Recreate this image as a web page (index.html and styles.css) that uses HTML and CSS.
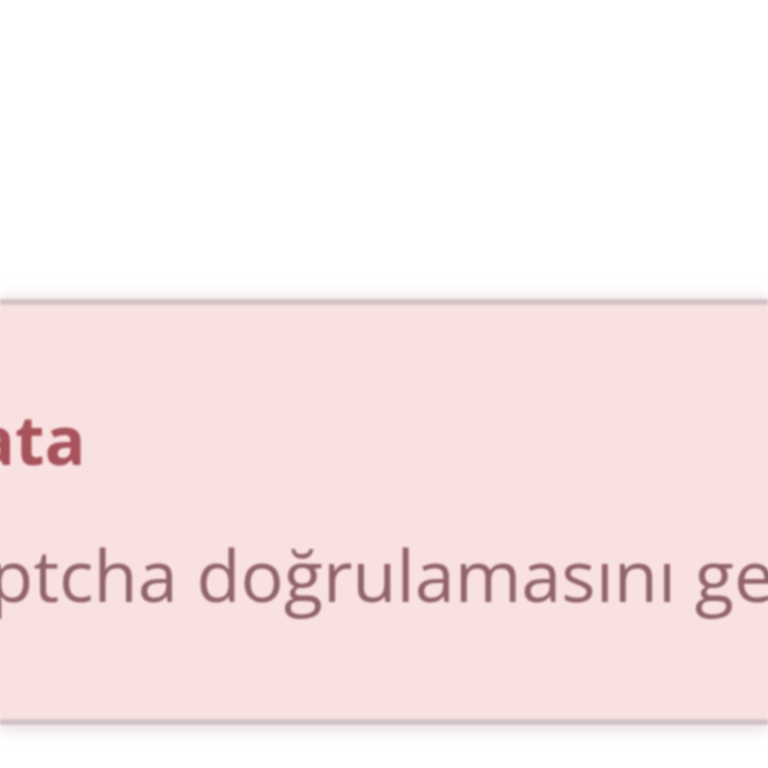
FILE: index.html
```html
<!DOCTYPE html>
<html lang="tr">
<head>
<meta charset="utf-8">
<title>Hata</title>
<link rel="stylesheet" href="styles.css">
</head>
<body>
<div class="page">
  <div class="alert" role="alert">
    <div class="alert-content">
      <div class="alert-title">Hata</div>
      <div class="alert-text">Captcha doğrulamasını geçemediniz. Lütfen tekrar deneyin.</div>
    </div>
  </div>
</div>
</body>
</html>
```

FILE: styles.css
```css
html, body {
  margin: 0;
  padding: 0;
  background: #ffffff;
}
.page {
  width: 768px;
  height: 768px;
  overflow: hidden;
  padding-top: 299px;
  box-sizing: border-box;
  font-family: "Open Sans", "Noto Sans", sans-serif;
}
.alert {
  box-sizing: border-box;
  height: 426px;
  border-top: 6px solid #d2c3c6;
  border-bottom: 6px solid #d2c3c6;
  background: #fae1e1;
  box-shadow: 0 -6px 10px rgba(240, 220, 220, 0.5), 0 6px 12px rgba(225, 205, 212, 0.6);
  filter: blur(1.2px);
}
.alert-content {
  display: flex;
  flex-direction: column;
  gap: 65px;
  padding-top: 100px;
  margin-left: -78px;
  white-space: nowrap;
}
.alert-title {
  font-size: 68px;
  line-height: 1;
  font-weight: 700;
  color: #a8525b;
}
.alert-text {
  font-size: 72px;
  line-height: 1;
  margin-left: -18px;
  color: #916469;
}
```
